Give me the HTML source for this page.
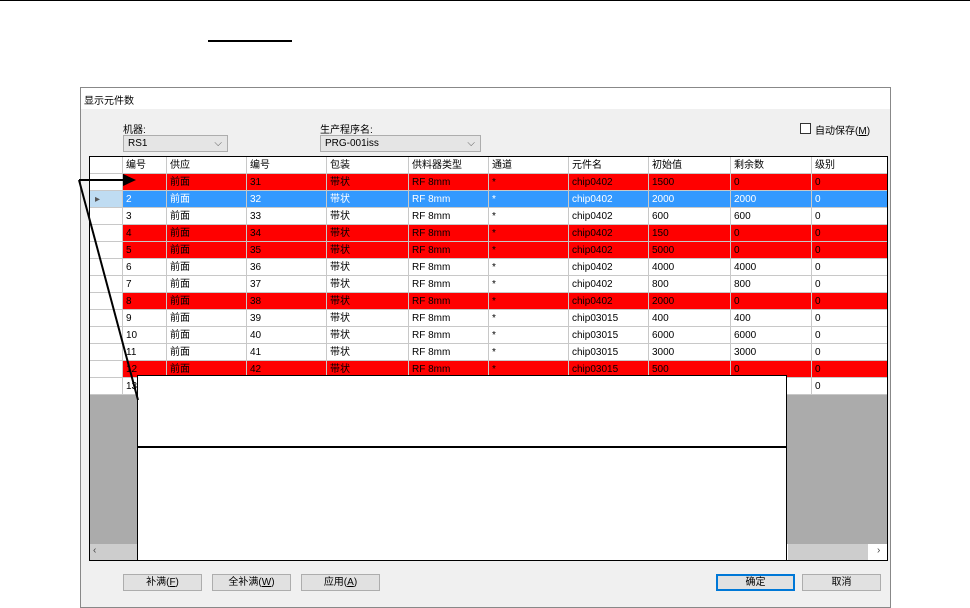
<!DOCTYPE html>
<html><head><meta charset="utf-8"><style>
*{margin:0;padding:0;box-sizing:border-box}
body{width:970px;height:608px;background:#fff;position:relative;overflow:hidden;font-family:"Liberation Sans","Noto Sans CJK SC",sans-serif;font-size:10px;color:#000}
.a{position:absolute}
.win{left:80px;top:87px;width:811px;height:521px;border:1px solid #888;background:#f0f0f0}
.tb{left:0;top:0;width:809px;height:21px;background:#fff}
.cell{position:absolute;height:17px;line-height:17px;padding-left:3px;border-right:1px solid #c8c8c8;border-bottom:1px solid #c8c8c8;white-space:nowrap;overflow:hidden}
.btn{position:absolute;height:17px;background:#e1e1e1;border:1px solid #adadad;text-align:center;line-height:15px;font-size:10px}
.combo{position:absolute;height:17px;background:#e5e5e5;border:1px solid #adadad;line-height:15px;padding-left:4px;font-size:10px}
.combo span{position:absolute;right:5px;top:0;color:#555}
</style></head><body>
<div class="a" style="left:0;top:0;width:970px;height:1px;background:#000"></div>
<div class="a" style="left:208px;top:40px;width:84px;height:2px;background:#000"></div>
<div class="a win">
 <div class="a tb"><div class="a" style="left:3px;top:4px;font-size:10px">显示元件数</div></div>
 <div class="a" style="left:42px;top:33px">机器:</div>
 <div class="combo" style="left:42px;top:47px;width:105px">RS1<span>⌵</span></div>
 <div class="a" style="left:239px;top:33px">生产程序名:</div>
 <div class="combo" style="left:239px;top:47px;width:161px">PRG-001iss<span>⌵</span></div>
 <div class="a" style="left:719px;top:35px;width:11px;height:11px;border:1px solid #333;background:#fff"></div>
 <div class="a" style="left:734px;top:34px">自动保存(<u>M</u>)</div>
 <div class="btn" style="left:42px;top:486px;width:79px">补满(<u>F</u>)</div>
 <div class="btn" style="left:131px;top:486px;width:79px">全补满(<u>W</u>)</div>
 <div class="btn" style="left:220px;top:486px;width:79px">应用(<u>A</u>)</div>
 <div class="btn" style="left:635px;top:486px;width:79px;border:2px solid #0078d7;line-height:13px">确定</div>
 <div class="btn" style="left:721px;top:486px;width:79px">取消</div>
</div>
<div class="a" id="grid" style="left:89px;top:156px;width:799px;height:405px;border:1px solid #000;background:#ababab;overflow:hidden"></div>
<div class="a" style="left:137px;top:375px;width:650px;height:186px;background:#fff;border:1px solid #000"></div>
<div class="a" style="left:137px;top:446px;width:650px;height:2px;background:#000"></div>
<svg class="a" style="left:0;top:0" width="970" height="608">
<line x1="79" y1="180" x2="125" y2="180" stroke="#000" stroke-width="2"/>
<polygon points="123,174 136,180 123,186" fill="#000"/>
<line x1="79" y1="180" x2="138" y2="400" stroke="#000" stroke-width="2"/>
</svg>
<script>
var g=document.getElementById('grid');
var cols=[0,33,77,157,237,319,399,479,559,641,722,798];
var hd=['','编号','供应','编号','包装','供料器类型','通道','元件名','初始值','剩余数','级别'];
var rows=[
['1','31','0402','1500','0','r'],['2','32','0402','2000','2000','b'],['3','33','0402','600','600','w'],['4','34','0402','150','0','r'],['5','35','0402','5000','0','r'],['6','36','0402','4000','4000','w'],['7','37','0402','800','800','w'],['8','38','0402','2000','0','r'],['9','39','03015','400','400','w'],['10','40','03015','6000','6000','w'],['11','41','03015','3000','3000','w'],['12','42','03015','500','0','r']];
var h='';
function c(i,y,t,bg,col){h+='<div class="cell" style="left:'+cols[i]+'px;top:'+y+'px;width:'+(cols[i+1]-cols[i])+'px;background:'+bg+';color:'+(col||'#000')+'">'+t+'</div>';}
for(var i=0;i<11;i++)c(i,0,hd[i],'#fff');
rows.forEach(function(r,k){var y=17+k*17;var bg=r[5]=='r'?'#ff0000':r[5]=='b'?'#3399ff':'#fff';var fc=r[5]=='b'?'#fff':'#000';
c(0,y,r[5]=='b'?'<span style="color:#555;padding-left:2px">▸</span>':'',r[5]=='b'?'#bfdcf2':'#fff');
var v=[r[0],'前面',r[1],'带状','RF 8mm','*','chip'+r[2],r[3],r[4],'0'];
for(var j=0;j<10;j++)c(j+1,y,(k==0&&j==0)?'':v[j],bg,fc);});
c(0,221,'','#fff');c(1,221,'13','#fff');for(var j=2;j<11;j++)c(j,221,j==10?'0':'','#fff');
h+='<div class="a" style="left:0;top:387px;width:797px;height:17px;background:#fff"></div>';
h+='<div class="a" style="left:0;top:387px;width:47px;height:16px;background:#cdcdcd"></div><div class="a" style="left:3px;top:388px;color:#444">‹</div>';
h+='<div class="a" style="left:698px;top:387px;width:80px;height:16px;background:#cdcdcd"></div><div class="a" style="left:787px;top:388px;color:#444">›</div>';
g.innerHTML=h;
</script>
</body></html>
